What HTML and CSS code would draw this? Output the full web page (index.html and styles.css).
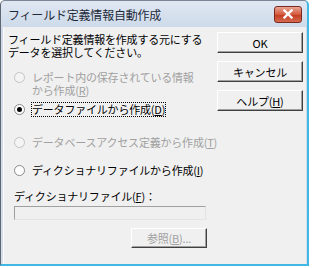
FILE: index.html
```html
<!DOCTYPE html>
<html lang="ja">

<head>
  <meta charset="UTF-8">
  <title>フィールド定義情報自動作成</title>
  <link rel="stylesheet" href="styles.css">
</head>

<body>
  <div class="window">
    <!-- タイトルバー -->
    <div class="titlebar">
      <span class="title">フィールド定義情報自動作成</span>
      <span class="close">
        <svg width="14" height="10" viewBox="0 0 14 10">
          <path d="M3.5 1.5 L10.5 8.5 M10.5 1.5 L3.5 8.5" stroke="#fff" stroke-width="2.4" stroke-linecap="square" />
        </svg>
      </span>
    </div>

    <!-- ダイアログ本体 -->
    <div class="client">
      <div class="main">
        <p class="intro">フィールド定義情報を作成する元にする<br>データを選択してください。</p>

        <label class="option opt-report disabled">
          <span class="radio"></span>
          <span>レポート内の保存されている情報<br>から作成(<u>R</u>)</span>
        </label>
        <label class="option opt-data">
          <span class="radio checked"></span>
          <span class="focus">データファイルから作成(<u>D</u>)</span>
        </label>
        <label class="option opt-db disabled">
          <span class="radio"></span>
          <span>データベースアクセス定義から作成(<u>T</u>)</span>
        </label>
        <label class="option opt-dict">
          <span class="radio"></span>
          <span>ディクショナリファイルから作成(<u>I</u>)</span>
        </label>

        <div class="field">
          <span class="field-label">ディクショナリファイル(<u>F</u>)：</span>
          <div class="textbox"></div>
          <div class="browse-row">
            <button class="btn btn-browse" disabled>参照(<u>B</u>)...</button>
          </div>
        </div>
      </div>

      <div class="side">
        <button class="btn">OK</button>
        <button class="btn">キャンセル</button>
        <button class="btn">ヘルプ(<u>H</u>)</button>
      </div>
    </div>
  </div>
</body>

</html>
```

FILE: styles.css
```css
/* 全体 */
body {
  margin: 0;
  background: #fff;
  font-family: "Noto Sans CJK JP", "Noto Sans", sans-serif;
  font-size: 11px;
  letter-spacing: -0.2px;
  color: #000;
}

.window {
  width: 306px;
  height: 263px;
  border-left: 1px solid #5f6670;
  border-top: 1px solid #7a8696;
  border-right: 2px solid #3fb8e6;
  border-bottom: 2px solid #3fb8e6;
  box-shadow: 0 1px 0 #2a4c6a;
  border-radius: 5px 5px 0 0;
  background: linear-gradient(to bottom, #dfe7f2, #cdd9e9 28px, #d5dfec);
  display: flex;
  flex-direction: column;
}

/* タイトルバー */
.titlebar {
  height: 26px;
  display: flex;
  align-items: center;
  justify-content: space-between;
  padding: 0 5px 0 7px;
}

.title {
  font-size: 12px;
  color: #1e2a3a;
}

.close {
  width: 26px;
  height: 15px;
  border: 1px solid #7a2a20;
  border-radius: 3px;
  background: linear-gradient(to bottom, #e8a593, #d4593f 50%, #c2391f 51%, #d56a4f);
  display: flex;
  align-items: center;
  justify-content: center;
}

/* ダイアログ本体 */
.client {
  flex: 1;
  margin: 0 1px 0 2px;
  background: #f0f0f0;
  border-left: 1px solid #fafafa;
  display: flex;
  padding: 0 4px;
  line-height: 13px;
}

.main {
  width: 198px;
  padding-top: 6px;
}

.intro {
  margin: 0;
}

.option {
  display: flex;
  align-items: flex-start;
  gap: 7px;
  padding-left: 6px;
}

.opt-report {
  margin-top: 12px;
}

.opt-data {
  margin-top: 6px;
}

.opt-db {
  margin-top: 20px;
  white-space: nowrap;
}

.opt-dict {
  margin-top: 15px;
}

.option.disabled {
  color: #a0a0a0;
}

.radio {
  width: 11px;
  height: 11px;
  margin-top: 1px;
  border-radius: 50%;
  border: 1px solid #8a8a8a;
  background: #fff;
  box-sizing: border-box;
  position: relative;
  flex: none;
}

.option.disabled .radio {
  border-color: #c4c4c4;
  background: #f4f4f4;
}

.radio.checked::after {
  content: "";
  position: absolute;
  left: 2px;
  top: 2px;
  width: 5px;
  height: 5px;
  border-radius: 50%;
  background: #000;
}

.focus {
  outline: 1px dotted #000;
}

/* ディクショナリファイル */
.field {
  margin-top: 13px;
  padding-left: 6px;
}

.field-label {
  display: block;
}

.textbox {
  height: 12px;
  margin-top: 3px;
  border: 1px solid #a0a0a0;
  border-right-color: #e3e3e3;
  border-bottom-color: #e3e3e3;
  background: #f0f0f0;
}

.browse-row {
  display: flex;
  justify-content: flex-end;
  margin-top: 8px;
  margin-right: -1px;
}

/* ボタン */
.btn {
  font-family: inherit;
  font-size: 11px;
  letter-spacing: -0.2px;
  width: 86px;
  height: 21px;
  padding: 0;
  background: #f0f0f0;
  border: 1px solid;
  border-color: #fff #404040 #404040 #fff;
  box-shadow: inset -1px -1px 0 #a0a0a0;
  color: #000;
}

.btn:disabled {
  color: #a0a0a0;
}

.btn-browse {
  width: 76px;
  height: 20px;
}

.side {
  display: flex;
  flex-direction: column;
  gap: 8px;
  margin-left: 11px;
  padding-top: 5px;
}
```
